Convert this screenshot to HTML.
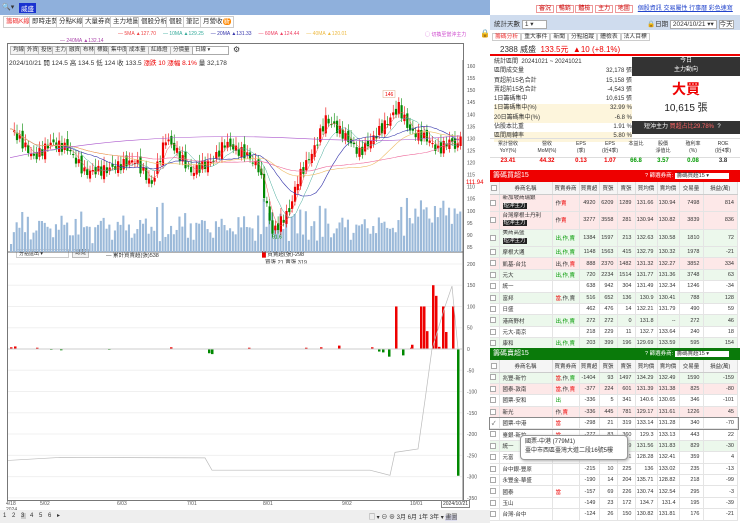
<!DOCTYPE html>
<html><head><meta charset="utf-8">
<style>
*{margin:0;padding:0;box-sizing:border-box}
body{width:740px;height:523px;overflow:hidden;background:#fff;font-family:"Liberation Sans","Noto Sans CJK TC",sans-serif;font-size:7px;color:#333;position:relative}
.a{position:absolute}
.tab{position:absolute;top:16px;height:12px;border:1px solid #ccc;background:#fff;font-size:6.5px;line-height:10px;padding:0 2px;color:#333}
.btn{position:absolute;height:9px;border:1px solid #bbb;background:#f4f4f4;font-size:5.5px;line-height:7px;padding:0 2px}
table{border-collapse:collapse;font-size:5.5px;table-layout:fixed}
.tb td{height:11.4px;border-right:1px solid #e4e4e4;border-bottom:1px solid #e4e4e4;text-align:right;padding-right:3px;white-space:nowrap;overflow:hidden}
.tb tr.two td{height:17.5px}
.tb td.l{text-align:left;padding-left:3px}
.tb th{height:12px;background:#f5f5f5;border-right:1px solid #ddd;border-bottom:1px solid #ccc;font-weight:normal}
.pk td{background:#fde8e8}.gn td{background:#ecf8ec}
.cb{display:inline-block;width:6px;height:6px;border:1px solid #aaa;background:#fff;vertical-align:middle}
.dk{background:#222;color:#fff;padding:0 1px}
.r{color:#e00}.g{color:#090}
</style></head><body>
<div class="a" style="left:0;top:0;width:490px;height:15px;background:#8fb0dc"></div>
<div class="a" style="left:2px;top:3px;font-size:7px">🔍▾</div>
<div class="a" style="left:19px;top:3px;background:#1a33d0;color:#fff;font-size:6.5px;padding:0 2px">威盛</div>
<div class="tab" style="left:3px;color:#e33">籌碼K線</div>
<div class="tab" style="left:29px">即時走勢</div>
<div class="tab" style="left:56px">分點K線</div>
<div class="tab" style="left:82px">大量券商</div>
<div class="tab" style="left:110px">主力地圖</div>
<div class="tab" style="left:138px">個股分析</div>
<div class="tab" style="left:166px">個股</div>
<div class="tab" style="left:183px">筆記</div>
<div class="tab" style="left:200px">月營收<span style="background:#f80;color:#fff;border-radius:3px;padding:0 1px">新</span></div>
<div class="a" style="top:31px;left:118px;font-size:5px;white-space:nowrap"><span style="color:#e44">— 5MA ▲127.70</span>&nbsp;&nbsp;&nbsp;&nbsp;&nbsp;<span style="color:#3a9">— 10MA ▲129.25</span>&nbsp;&nbsp;&nbsp;&nbsp;&nbsp;<span style="color:#33a">— 20MA ▲131.33</span>&nbsp;&nbsp;&nbsp;&nbsp;&nbsp;<span style="color:#e46">— 60MA ▲124.44</span>&nbsp;&nbsp;&nbsp;&nbsp;&nbsp;<span style="color:#eb4">— 40MA ▲120.01</span></div>
<div class="a" style="top:31px;left:425px;font-size:5px;color:#c4c">◯ 切換至當沖主力</div>
<div class="a" style="top:29px;left:480px;font-size:8px">🔒</div>
<div class="a" style="top:38px;left:60px;font-size:5px;color:#a4a">— 240MA ▲132.14</div>
<div class="a" style="left:7px;top:43px;width:457px;height:458px;border:1px solid #777"></div>
<div class="btn" style="left:10px;top:46px">均線</div><div class="btn" style="left:24px;top:46px">外資</div><div class="btn" style="left:38px;top:46px">投信</div><div class="btn" style="left:52px;top:46px">主力</div><div class="btn" style="left:66px;top:46px">融資</div><div class="btn" style="left:80px;top:46px">布林</div><div class="btn" style="left:94px;top:46px">標籤</div><div class="btn" style="left:108px;top:46px">集中度</div><div class="btn" style="left:126px;top:46px">成本量</div><div class="btn" style="left:148px;top:46px">紅綠燈</div><div class="btn" style="left:170px;top:46px">分價量</div>
<div class="a" style="left:192px;top:46px;width:37px;height:9px;border:1px solid #aaa;font-size:5.5px;line-height:7px;padding-left:2px">日線 ▾</div>
<div class="a" style="left:233px;top:45px;font-size:8px">⚙</div>
<div class="a" style="left:9px;top:57px;font-size:6.5px;white-space:nowrap">2024/10/21 開 124.5 高 134.5 低 124 收 133.5 <span class="r">漲跌 10 漲幅 8.1%</span> 量 32,178</div>
<div class="a" style="left:16px;top:249px;width:53px;height:9px;border:1px solid #ccc;font-size:5px;padding-left:2px;background:#fff">分點進出 ▾</div>
<div class="btn" style="left:72px;top:249px">總覽</div>
<div class="a" style="left:106px;top:251px;font-size:5.5px">— 累計買賣超(張)538</div>
<div class="a" style="left:262px;top:250px;font-size:5.5px"><span style="color:#e00">█</span> 買賣超(張)-298<br>&nbsp;&nbsp;買張 21 賣張 319</div>
<svg class="a" style="left:0;top:60px" width="490" height="450" id="ch"></svg>
<div class="a" style="left:0;top:510px;width:490px;height:13px;background:#eee"></div>
<div class="a" style="left:3px;top:512px;font-size:6px;letter-spacing:2px">1 2 <span style="background:#ccc">3</span> 4 5 6 ▸</div>
<div class="a" style="left:369px;top:512px;font-size:6px;white-space:nowrap">▢ ▾ ⊖ ⊕ 3月 6月 1年 3年 ▾ <span style="background:#dde">畫圖</span></div>
<div class="a" style="left:441px;top:500px;border:1px solid #888;font-size:5px;background:#fff;padding:0 1px">2024/10/21</div>

<div class="a" style="left:536px;top:3px;font-size:6px;white-space:nowrap"><span style="border:1px solid #e99;color:#c00;padding:0 2px">審況</span> <span style="border:1px solid #e99;color:#c00;padding:0 2px">暢銷</span> <span style="border:1px solid #e99;color:#c00;padding:0 2px">體檢</span> <span style="border:1px solid #e99;color:#c00;padding:0 2px">主力</span> <span style="border:1px solid #e99;color:#c00;padding:0 2px">地圖</span>&nbsp;&nbsp; <span style="color:#24c;text-decoration:underline">個股資訊 交易屬性 行事曆 彩色速寫</span></div>
<div class="a" style="left:490px;top:15px;width:250px;height:15px;background:#cfdcee"></div>
<div class="a" style="left:494px;top:18px;font-size:6.5px">統計天數 <span style="border:1px solid #aaa;background:#fff;padding:0 12px 0 2px">1 ▾</span></div>
<div class="a" style="left:647px;top:18px;font-size:6.5px;white-space:nowrap">🔒日期 <span style="border:1px solid #aaa;background:#fff;padding:0 2px">2024/10/21 ▾▾</span> <span style="border:1px solid #aaa;background:#fff">今天</span></div>
<div class="a" style="left:492px;top:31px;font-size:5.8px;white-space:nowrap"><span style="color:#e33;border:1px solid #ccc;padding:0 2px">籌碼分析</span><span style="border:1px solid #ccc;padding:0 2px">重大事件</span><span style="border:1px solid #ccc;padding:0 2px">新聞</span><span style="border:1px solid #ccc;padding:0 2px">分點追蹤</span><span style="border:1px solid #ccc;padding:0 2px">體檢表</span><span style="border:1px solid #ccc;padding:0 2px">法人目標</span></div>
<div class="a" style="left:490px;top:41px;width:250px;height:15px;border-bottom:2px solid #e00"></div>
<div class="a" style="left:500px;top:44px;font-size:8px;white-space:nowrap">2388 威盛 <span class="r">&nbsp;133.5元 &nbsp;▲10 (+8.1%)</span></div>
<div class="a" style="left:494px;top:58px;width:138px;font-size:6px;line-height:9.3px">
<div>統計區間 &nbsp;20241021 ~ 20241021</div>
<div>區間成交量<span style="float:right">32,178 張</span></div>
<div>買超前15名合計<span style="float:right">15,158 張</span></div>
<div>賣超前15名合計<span style="float:right">-4,543 張</span></div>
<div>1日籌碼集中<span style="float:right">10,615 張</span></div>
<div style="background:#fdf5dc">1日籌碼集中(%)<span style="float:right">32.99 %</span></div>
<div style="background:#fdf5dc">20日籌碼集中(%)<span style="float:right">-6.8 %</span></div>
<div>佔股本比重<span style="float:right">1.91 %</span></div>
<div style="background:#fdf5dc">區間周轉率<span style="float:right">5.80 %</span></div>
</div>
<div class="a" style="left:632px;top:57px;width:108px;height:19px;background:#333;color:#fff;font-size:6px;text-align:center;line-height:9px">今日<br>主力動向</div>
<div class="a" style="left:632px;top:79px;width:108px;text-align:center;color:#e00;font-size:14px;font-weight:bold;font-family:'Noto Sans CJK TC',sans-serif">大買</div>
<div class="a" style="left:632px;top:99px;width:108px;text-align:center;font-size:10px;color:#222">10,615 張</div>
<div class="a" style="left:632px;top:121px;width:108px;height:13px;background:#333;color:#fff;font-size:6px;line-height:13px;padding-left:12px;white-space:nowrap">短沖主力 <span style="color:#f66">買超占比29.78%</span> &nbsp;?</div>
<div class="a" style="left:490px;top:138px;width:250px;height:20px;border-top:1px solid #ddd;border-bottom:1px solid #ddd;font-size:5px;display:flex;text-align:center;line-height:7px;padding-top:2px">
<div style="width:36px">累計營收<br>YoY(%)</div><div style="width:42px">營收<br>MoM(%)</div><div style="width:26px">EPS<br>(季)</div><div style="width:32px">EPS<br>(近4季)</div><div style="width:20px">本益比</div><div style="width:34px">股價<br>淨值比</div><div style="width:26px">殖利率<br>(%)</div><div style="width:34px">ROE<br>(近4季)</div></div>
<div class="a" style="left:490px;top:158px;width:250px;font-size:6px;font-weight:bold;display:flex;text-align:center">
<div style="width:36px" class="r">23.41</div><div style="width:42px" class="r">44.32</div><div style="width:26px" class="r">0.13</div><div style="width:32px" class="r">1.07</div><div style="width:20px" class="g">66.8</div><div style="width:34px" class="g">3.57</div><div style="width:26px" class="g">0.08</div><div style="width:34px">3.8</div></div>
<div class="a" style="left:490px;top:170px;width:250px;height:12px;background:#e00;color:#fff;font-size:7px;line-height:12px;padding-left:3px">籌碼買超15<span style="position:absolute;left:155px;font-size:5.5px">? 篩選券商: <span style="background:#fff;color:#333;padding:0 20px 0 2px">籌碼買超15 ▾</span></span></div>
<div class="a" style="left:490px;top:182px;width:248px"><table class="tb" style="width:248px">
<tr><th style="width:9px"><span class="cb"></span></th><th style="width:53px">券商名稱</th><th style="width:27px">買賣券商</th><th style="width:20px">買賣超</th><th style="width:18px">買張</th><th style="width:18px">賣張</th><th style="width:22px">買均價</th><th style="width:22px">賣均價</th><th style="width:24px">交易量</th><th>損益(萬)</th></tr>
<tr class="pk two"><td><span class="cb"></span></td><td class="l" style="line-height:7.5px">新加坡商瑞銀<br><span class="dk">短沖主力</span></td><td class="l">作<span class="r">賣</span></td><td>4920</td><td>6209</td><td>1289</td><td>131.66</td><td>130.94</td><td>7498</td><td>814</td></tr>
<tr class="pk two"><td><span class="cb"></span></td><td class="l" style="line-height:7.5px">台灣摩根士丹利<br><span class="dk">短沖主力</span></td><td class="l">作<span class="r">賣</span></td><td>3277</td><td>3558</td><td>281</td><td>130.94</td><td>130.82</td><td>3839</td><td>836</td></tr>
<tr class="gn two"><td><span class="cb"></span></td><td class="l" style="line-height:7.5px">美商高盛<br><span class="dk">短沖主力</span></td><td class="l g">出,作,賣</td><td>1384</td><td>1597</td><td>213</td><td>132.63</td><td>130.58</td><td>1810</td><td>72</td></tr>
<tr class="gn"><td><span class="cb"></span></td><td class="l">摩根大通</td><td class="l g">出,作,賣</td><td>1148</td><td>1563</td><td>415</td><td>132.79</td><td>130.32</td><td>1978</td><td>-21</td></tr>
<tr class="pk"><td><span class="cb"></span></td><td class="l">凱基-台北</td><td class="l">出,作,<span class="r">賣</span></td><td>888</td><td>2370</td><td>1482</td><td>131.32</td><td>132.27</td><td>3852</td><td>334</td></tr>
<tr class="gn"><td><span class="cb"></span></td><td class="l">元大</td><td class="l g">出,作,賣</td><td>720</td><td>2234</td><td>1514</td><td>131.77</td><td>131.36</td><td>3748</td><td>63</td></tr>
<tr><td><span class="cb"></span></td><td class="l">統一</td><td></td><td>638</td><td>942</td><td>304</td><td>131.49</td><td>132.34</td><td>1246</td><td>-34</td></tr>
<tr class="gn"><td><span class="cb"></span></td><td class="l">富邦</td><td class="l"><span class="r">當</span>,作,賣</td><td>516</td><td>652</td><td>136</td><td>130.9</td><td>130.41</td><td>788</td><td>128</td></tr>
<tr><td><span class="cb"></span></td><td class="l">日盛</td><td></td><td>462</td><td>476</td><td>14</td><td>132.21</td><td>131.79</td><td>490</td><td>59</td></tr>
<tr class="gn"><td><span class="cb"></span></td><td class="l">港商野村</td><td class="l g">出,作,賣</td><td>272</td><td>272</td><td>0</td><td>131.8</td><td>--</td><td>272</td><td>46</td></tr>
<tr><td><span class="cb"></span></td><td class="l">元大-南京</td><td></td><td>218</td><td>229</td><td>11</td><td>132.7</td><td>133.64</td><td>240</td><td>18</td></tr>
<tr class="gn"><td><span class="cb"></span></td><td class="l">康和</td><td class="l g">出,作,賣</td><td>203</td><td>399</td><td>196</td><td>129.69</td><td>133.59</td><td>595</td><td>154</td></tr>
</table></div>
<div class="a" style="left:490px;top:348px;width:250px;height:12px;background:#0a7a0a;color:#fff;font-size:7px;line-height:12px;padding-left:3px">籌碼賣超15<span style="position:absolute;left:155px;font-size:5.5px">? 篩選券商: <span style="background:#fff;color:#333;padding:0 20px 0 2px">籌碼賣超15 ▾</span></span></div>
<div class="a" style="left:490px;top:360px;width:248px"><table class="tb" style="width:248px">
<tr><th style="width:9px"><span class="cb"></span></th><th style="width:53px">券商名稱</th><th style="width:27px">買賣券商</th><th style="width:20px">買賣超</th><th style="width:18px">買張</th><th style="width:18px">賣張</th><th style="width:22px">買均價</th><th style="width:22px">賣均價</th><th style="width:24px">交易量</th><th>損益(萬)</th></tr>
<tr class="gn"><td><span class="cb"></span></td><td class="l">兆豐-新竹</td><td class="l"><span class="r">當</span>,作,<span class="g">賣</span></td><td>-1404</td><td>93</td><td>1497</td><td>134.29</td><td>132.49</td><td>1590</td><td>-159</td></tr>
<tr class="pk"><td><span class="cb"></span></td><td class="l">國泰-敦南</td><td class="l"><span class="r">當</span>,作,<span class="r">賣</span></td><td>-377</td><td>224</td><td>601</td><td>131.39</td><td>131.38</td><td>825</td><td>-80</td></tr>
<tr><td><span class="cb"></span></td><td class="l">國票-安和</td><td class="l g">出</td><td>-336</td><td>5</td><td>341</td><td>140.6</td><td>130.65</td><td>346</td><td>-101</td></tr>
<tr class="pk"><td><span class="cb"></span></td><td class="l">新光</td><td class="l">作,<span class="r">賣</span></td><td>-336</td><td>445</td><td>781</td><td>129.17</td><td>131.61</td><td>1226</td><td>45</td></tr>
<tr style="outline:1px solid #888"><td>✓</td><td class="l">國票-中港</td><td class="l r">當</td><td>-298</td><td>21</td><td>319</td><td>133.14</td><td>131.28</td><td>340</td><td>-70</td></tr>
<tr><td><span class="cb"></span></td><td class="l">臺銀-新竹</td><td class="l r">當</td><td>-277</td><td>83</td><td>360</td><td>129.3</td><td>133.13</td><td>443</td><td>22</td></tr>
<tr class="gn"><td><span class="cb"></span></td><td class="l">統一</td><td></td><td>-229</td><td>300</td><td>529</td><td>131.56</td><td>131.83</td><td>829</td><td>-30</td></tr>
<tr><td><span class="cb"></span></td><td class="l">元富</td><td></td><td>-223</td><td>68</td><td>291</td><td>128.28</td><td>132.41</td><td>359</td><td>4</td></tr>
<tr><td><span class="cb"></span></td><td class="l">台中銀-豐原</td><td></td><td>-215</td><td>10</td><td>225</td><td>136</td><td>133.02</td><td>235</td><td>-13</td></tr>
<tr><td><span class="cb"></span></td><td class="l">永豐金-華盛</td><td></td><td>-190</td><td>14</td><td>204</td><td>135.71</td><td>128.82</td><td>218</td><td>-99</td></tr>
<tr><td><span class="cb"></span></td><td class="l">國泰</td><td class="l r">當</td><td>-157</td><td>69</td><td>226</td><td>130.74</td><td>132.54</td><td>295</td><td>-3</td></tr>
<tr><td><span class="cb"></span></td><td class="l">玉山</td><td></td><td>-149</td><td>23</td><td>172</td><td>134.7</td><td>131.4</td><td>195</td><td>-39</td></tr>
<tr><td><span class="cb"></span></td><td class="l">台灣-台中</td><td></td><td>-124</td><td>26</td><td>150</td><td>130.82</td><td>131.81</td><td>176</td><td>-21</td></tr>
</table></div>
<div class="a" style="left:520px;top:435px;width:108px;height:25px;background:#fff;border:1px solid #999;border-radius:4px;box-shadow:1px 1px 3px #aaa;font-size:6px;line-height:9px;padding:2px 4px">國票-中港 (779M1)<br>臺中市西區臺灣大道二段16號5樓</div>

<script>
var s=document.getElementById('ch'),h='';
function P(v){return 6+(160-v)*2.413}
for(var v=160;v>=85;v-=5){h+='<text x="467" y="'+(P(v)+2)+'" font-size="5" fill="#555">'+v+'</text>'}
h+='<text x="466" y="'+(P(111.94)+2)+'" font-size="6" fill="#e00">111.94</text>';
h+='<line x1="463" y1="0" x2="463" y2="440" stroke="#777" stroke-width="1"/>';
h+='<line x1="8" y1="192" x2="463" y2="192" stroke="#666"/>';
function Q(v){return 289-v*0.4253}
for(var v=200;v>=-350;v-=50){h+='<text x="467" y="'+(Q(v)+2)+'" font-size="5" fill="#555">'+v+'</text><line x1="8" y1="'+Q(v)+'" x2="462" y2="'+Q(v)+'" stroke="#f0f0f0"/>'}
var kp=[[0,134],[8,122],[14,128],[20,126],[26,116],[34,117],[44,121],[50,111],[55,130],[58,126],[64,116],[72,121],[76,128],[84,123],[88,118],[93,91],[99,100],[102,113],[108,126],[112,138],[118,132],[124,124],[128,129],[134,137],[138,143],[142,133],[148,130],[152,125],[156,129],[159,126],[160,133]];
var n=161,c=[];for(var i=0;i<n;i++){for(var k=0;k<kp.length-1;k++)if(i>=kp[k][0]&&i<=kp[k+1][0])break;var a=kp[k],b=kp[k+1];c.push(a[1]+(b[1]-a[1])*(i-a[0])/(b[0]-a[0])+Math.sin(i*2.7)*2.2)}
var dx=452/n,x0=10;
function ma(m){var d='';for(var i=0;i<n;i++){var st=Math.max(0,i-m+1),sm=0;for(var j=st;j<=i;j++)sm+=c[j];d+=(i?'L':'M')+(x0+i*dx).toFixed(1)+','+P(sm/(i-st+1)).toFixed(1)}return d}
var vol=[];for(var i=0;i<n;i++){var vv=8+Math.abs(Math.sin(i*1.3))*10+Math.abs(c[i]-(c[i-1]||c[i]))*4;if(i>140)vv+=15;vol.push(Math.min(vv,60))}
for(var i=0;i<n;i++){var x=x0+i*dx;h+='<rect x="'+x.toFixed(1)+'" y="'+(192-vol[i])+'" width="'+(dx*0.75).toFixed(1)+'" height="'+vol[i]+'" fill="#9bb9d9"/>'}
for(var i=1;i<n;i++){var o=c[i-1]+Math.sin(i*5.1)*1.5,cl=c[i],up=cl>=o,x=x0+i*dx,hi=Math.max(o,cl)+1.5+Math.abs(Math.sin(i))*2,lo=Math.min(o,cl)-1.5,col=up?'#e00':'#080';
h+='<line x1="'+(x+dx/2)+'" y1="'+P(hi)+'" x2="'+(x+dx/2)+'" y2="'+P(lo)+'" stroke="'+col+'" stroke-width=".6"/><rect x="'+(x+0.3).toFixed(1)+'" y="'+P(Math.max(o,cl)).toFixed(1)+'" width="'+(dx*0.8).toFixed(1)+'" height="'+Math.max(1,Math.abs(o-cl)*2.413).toFixed(1)+'" fill="'+col+'"/>'}
h+='<path d="'+ma(5)+'" fill="none" stroke="#e55" stroke-width=".5"/><path d="'+ma(10)+'" fill="none" stroke="#4a9" stroke-width=".5"/><path d="'+ma(20)+'" fill="none" stroke="#33a" stroke-width=".6"/><path d="'+ma(60)+'" fill="none" stroke="#e69" stroke-width=".6"/><path d="'+ma(40)+'" fill="none" stroke="#eb6" stroke-width=".6"/>';
h+='<path d="M10,'+P(122)+' C100,'+P(130)+' 200,'+P(132)+' 300,'+P(130)+' S420,'+P(130)+' 460,'+P(131)+'" fill="none" stroke="#a5c" stroke-width=".6"/>';
h+='<rect x="383" y="'+(P(149)-2)+'" width="12" height="7" fill="#fff" stroke="#da8" stroke-width=".5"/><text x="385" y="'+(P(148)+1)+'" font-size="5" fill="#e00">146</text>';
h+='<text x="272" y="'+(P(89)+1)+'" font-size="5" fill="#080">91.6</text>';
var lb=[[395,100],[402,-15],[411,10],[420,100],[423,100],[426,42],[432,150],[435,125],[438,5],[442,100],[445,40],[452,100],[457,-298]];
lb.forEach(function(b){var v=b[1],y=v>0?Q(v):Q(0);h+='<rect x="'+b[0]+'" y="'+y+'" width="2.5" height="'+Math.abs(v*0.4253)+'" fill="'+(v>0?'#e00':'#080')+'"/>'});
[[10,4],[14,6],[36,3],[50,-2],[60,-3],[108,-2],[170,4],[208,-10],[211,-12],[248,3],[305,3],[320,4],[338,8],[371,4],[378,-6],[382,-8],[388,-18],[410,3]].forEach(function(b){var v=b[1];h+='<rect x="'+b[0]+'" y="'+(v>0?Q(v):Q(0))+'" width="2.5" height="'+Math.abs(v*0.4253)+'" fill="'+(v>0?'#e00':'#080')+'"/>'});
h+='<line x1="8" y1="'+Q(0)+'" x2="462" y2="'+Q(0)+'" stroke="#ccc"/>';
h+='<path d="M8,'+Q(-262)+' L60,'+Q(-255)+' L205,'+Q(-256)+' L212,'+Q(-285)+' L370,'+Q(-285)+' L390,'+Q(-297)+' L395,'+Q(-243)+' L418,'+Q(-235)+' L425,'+Q(-120)+' L432,'+Q(0)+' L445,'+Q(100)+' L452,'+Q(148)+' L458,'+Q(0)+'" fill="none" stroke="#bbb" stroke-width=".7"/>';
[['4/18',6],['5/02',40],['6/03',117],['7/01',187],['8/01',263],['9/02',342],['10/01',410]].forEach(function(d){h+='<text x="'+d[1]+'" y="445" font-size="5" fill="#555">'+d[0]+'</text>'});
h+='<text x="6" y="451" font-size="5" fill="#555">2024</text>';
s.innerHTML=h;
</script>
</body></html>
